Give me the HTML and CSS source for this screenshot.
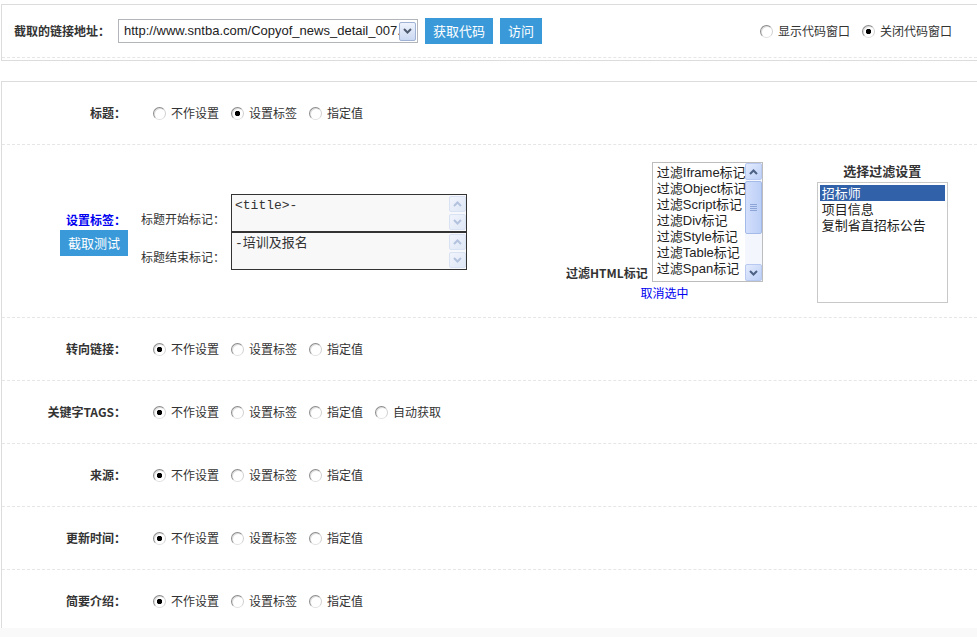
FILE: index.html
```html
<!DOCTYPE html>
<html lang="zh-CN">
<head>
<meta charset="utf-8">
<title>采集设置</title>
<link rel="stylesheet" href="styles.css">
</head>
<body>
<div class="page">
  <div class="panel top-panel">
    <div class="top-row">
      <div class="url-group">
        <span class="field-label">截取的链接地址：</span>
        <div class="fake-select">
          <span class="fake-select-text">http://www.sntba.com/Copyof_news_detail_007.html</span>
          <span class="drop-btn"><svg width="9" height="6" viewBox="0 0 9 6"><path d="M1 1 L4.5 4.5 L8 1" fill="none" stroke="#4f5b70" stroke-width="2"/></svg></span>
        </div>
        <button class="btn">获取代码</button>
        <button class="btn">访问</button>
      </div>
      <div class="opts opts-top">
        <label class="opt"><input type="radio" name="codewin">显示代码窗口</label>
        <label class="opt"><input type="radio" name="codewin" checked>关闭代码窗口</label>
      </div>
    </div>
  </div>

  <div class="panel main-panel">
    <div class="row">
      <div class="row-label">标题：</div>
      <div class="opts">
        <label class="opt"><input type="radio" name="r1">不作设置</label>
        <label class="opt"><input type="radio" name="r1" checked>设置标签</label>
        <label class="opt"><input type="radio" name="r1">指定值</label>
      </div>
    </div>

    <div class="row row-tag">
      <div class="tag-col">
        <div class="tag-label">设置标签：</div>
        <button class="btn tag-btn">截取测试</button>
      </div>
      <div class="markers">
        <div class="marker-label">标题开始标记：</div>
        <div class="code-box">
          <div class="code-text">&lt;title&gt;-</div>
          <div class="mini-scroll">
            <span class="sb-btn off"><svg width="9" height="6" viewBox="0 0 9 6"><path d="M1 5 L4.5 1.5 L8 5" fill="none" stroke="#b3c2de" stroke-width="2"/></svg></span>
            <span class="sb-btn off"><svg width="9" height="6" viewBox="0 0 9 6"><path d="M1 1 L4.5 4.5 L8 1" fill="none" stroke="#b3c2de" stroke-width="2"/></svg></span>
          </div>
        </div>
        <div class="marker-label">标题结束标记：</div>
        <div class="code-box">
          <div class="code-text">-培训及报名</div>
          <div class="mini-scroll">
            <span class="sb-btn off"><svg width="9" height="6" viewBox="0 0 9 6"><path d="M1 5 L4.5 1.5 L8 5" fill="none" stroke="#b3c2de" stroke-width="2"/></svg></span>
            <span class="sb-btn off"><svg width="9" height="6" viewBox="0 0 9 6"><path d="M1 1 L4.5 4.5 L8 1" fill="none" stroke="#b3c2de" stroke-width="2"/></svg></span>
          </div>
        </div>
      </div>

      <div class="filter-html">
        <div class="filter-line">
          <span class="filter-label">过滤HTML标记</span>
          <div class="listbox listbox-html">
            <ul class="list-items">
              <li>过滤Iframe标记</li>
              <li>过滤Object标记</li>
              <li>过滤Script标记</li>
              <li>过滤Div标记</li>
              <li>过滤Style标记</li>
              <li>过滤Table标记</li>
              <li>过滤Span标记</li>
            </ul>
            <div class="scrollbar">
              <span class="sb-btn"><svg width="9" height="6" viewBox="0 0 9 6"><path d="M1 5 L4.5 1.5 L8 5" fill="none" stroke="#4d6185" stroke-width="2"/></svg></span>
              <span class="sb-thumb"><svg width="7" height="7" viewBox="0 0 7 7"><path d="M0 0.5H7M0 2.5H7M0 4.5H7M0 6.5H7" stroke="#8da4d6" stroke-width="1"/></svg></span>
              <span class="sb-track"></span>
              <span class="sb-btn"><svg width="9" height="6" viewBox="0 0 9 6"><path d="M1 1 L4.5 4.5 L8 1" fill="none" stroke="#4d6185" stroke-width="2"/></svg></span>
            </div>
          </div>
        </div>
        <a class="unselect" href="#">取消选中</a>
      </div>

      <div class="filter-set">
        <div class="filter-set-title">选择过滤设置</div>
        <ul class="listbox listbox-set">
          <li class="selected">招标师</li>
          <li>项目信息</li>
          <li>复制省直招标公告</li>
        </ul>
      </div>
    </div>

    <div class="row">
      <div class="row-label">转向链接：</div>
      <div class="opts">
        <label class="opt"><input type="radio" name="r3" checked>不作设置</label>
        <label class="opt"><input type="radio" name="r3">设置标签</label>
        <label class="opt"><input type="radio" name="r3">指定值</label>
      </div>
    </div>

    <div class="row">
      <div class="row-label">关键字TAGS：</div>
      <div class="opts">
        <label class="opt"><input type="radio" name="r4" checked>不作设置</label>
        <label class="opt"><input type="radio" name="r4">设置标签</label>
        <label class="opt"><input type="radio" name="r4">指定值</label>
        <label class="opt"><input type="radio" name="r4">自动获取</label>
      </div>
    </div>

    <div class="row">
      <div class="row-label">来源：</div>
      <div class="opts">
        <label class="opt"><input type="radio" name="r5" checked>不作设置</label>
        <label class="opt"><input type="radio" name="r5">设置标签</label>
        <label class="opt"><input type="radio" name="r5">指定值</label>
      </div>
    </div>

    <div class="row">
      <div class="row-label">更新时间：</div>
      <div class="opts">
        <label class="opt"><input type="radio" name="r6" checked>不作设置</label>
        <label class="opt"><input type="radio" name="r6">设置标签</label>
        <label class="opt"><input type="radio" name="r6">指定值</label>
      </div>
    </div>

    <div class="row">
      <div class="row-label">简要介绍：</div>
      <div class="opts">
        <label class="opt"><input type="radio" name="r7" checked>不作设置</label>
        <label class="opt"><input type="radio" name="r7">设置标签</label>
        <label class="opt"><input type="radio" name="r7">指定值</label>
      </div>
    </div>
  </div>
</div>
<div class="footer-bar"></div>
</body>
</html>
```

FILE: styles.css
```css
* { box-sizing: border-box; }

body {
  margin: 0;
  background: #fff;
  font-family: "Noto Sans CJK SC", "Liberation Sans", sans-serif;
  font-size: 12px;
  color: #333;
}

.page { padding: 4px 0 0 1px; }

.panel {
  border: 1px solid #dcdcdc;
  border-right: none;
  background: #fff;
}

.top-panel { padding-bottom: 2px; }

.top-row {
  height: 53px;
  border-bottom: 1px dashed #e6e6e6;
  display: flex;
  align-items: center;
  justify-content: space-between;
  padding: 0 25px 0 12px;
}

.url-group { display: flex; align-items: center; }

.field-label {
  font-weight: bold;
  line-height: 14px;
  margin-right: 8px;
  color: #333;
}

.fake-select {
  width: 300px;
  height: 24px;
  border: 1px solid #b2b6bb;
  display: flex;
  align-items: center;
  padding: 0 1px 0 5px;
  background: #fff;
}

.fake-select-text {
  flex: 1;
  min-width: 0;
  overflow: hidden;
  white-space: nowrap;
  font: 13px/16px "Liberation Sans", sans-serif;
  color: #222;
}

.drop-btn {
  flex: none;
  width: 17px;
  height: 19px;
  border: 1px solid #9fb2d6;
  border-radius: 2px;
  background: linear-gradient(#eef3fd, #cbd8f2);
  display: flex;
  align-items: center;
  justify-content: center;
}

.btn {
  height: 26px;
  padding: 0 8px;
  border: 0;
  margin-left: 7px;
  background: #3a9ad9;
  color: #fff;
  font: 13px/26px "Noto Sans CJK SC", sans-serif;
}

.main-panel { margin-top: 20px; }

.row {
  display: flex;
  align-items: center;
  height: 63px;
  border-bottom: 1px dashed #e6e6e6;
}

.row-label {
  flex: none;
  width: 126px;
  padding-right: 2px;
  text-align: right;
  font-weight: bold;
  line-height: 14px;
  color: #333;
}

.opts {
  display: flex;
  align-items: center;
  margin-left: 25px;
}

.opt {
  display: inline-flex;
  align-items: center;
  margin-right: 12px;
  line-height: 14px;
  color: #333;
}

.opts-top { margin-left: 0; }
.opts-top .opt:last-child { margin-right: 0; }

.opt input {
  -webkit-appearance: none;
  appearance: none;
  flex: none;
  width: 13px;
  height: 13px;
  margin: 0 5px 0 0;
  border-radius: 50%;
  border: 1px solid #a0a0a0;
  border-color: #8c8c8c #d0d0d0 #e0e0e0 #8c8c8c;
  background: #fff;
  box-shadow: inset 1px 1px 0 #dedede;
}

.opt input:checked {
  background: radial-gradient(circle at 50% 50%, #000 0, #000 2.4px, #fff 3px);
}

/* big row */
.row-tag { height: 173px; }

.tag-col {
  flex: none;
  width: 126px;
  display: flex;
  flex-direction: column;
  align-items: flex-end;
  padding-top: 6px;
}

.tag-label {
  padding-right: 2px;
  font-weight: bold;
  line-height: 14px;
  color: #0000f0;
}

.tag-btn { margin: 3px 0 0 0; }

.markers {
  flex: none;
  display: grid;
  grid-template-columns: 84px 236px;
  grid-template-rows: 38px 38px;
  column-gap: 6px;
  margin: 2px 0 0 13px;
}

.marker-label {
  padding-top: 18px;
  line-height: 14px;
  white-space: nowrap;
  color: #333;
}

.code-box {
  display: flex;
  height: 38px;
  border: 1px solid #333;
  background: #f8f8f8;
}

.code-text {
  flex: 1;
  padding: 3px 3px;
  font: 13px/16px "Liberation Mono", "Noto Sans CJK SC", monospace;
  color: #333;
  white-space: pre;
}

.mini-scroll {
  flex: none;
  width: 17px;
  display: flex;
  flex-direction: column;
  justify-content: space-between;
  padding: 1px 0;
  background: #f6f8fc;
}

.sb-btn {
  flex: none;
  width: 17px;
  height: 17px;
  border: 1px solid #b7c9f0;
  border-radius: 2px;
  background: linear-gradient(135deg, #e3ebfd, #bdd0f7);
  display: flex;
  align-items: center;
  justify-content: center;
}

.mini-scroll .sb-btn { height: 16px; }

.sb-btn.off {
  border-color: #d9e2f3;
  background: linear-gradient(135deg, #f0f4fc, #dfe7f6);
}

.filter-html {
  flex: none;
  margin-left: 99px;
  display: flex;
  flex-direction: column;
  align-items: center;
}

.filter-line { display: flex; align-items: flex-end; }

.filter-label {
  font-weight: bold;
  line-height: 14px;
  margin: 0 4px 2px 0;
  color: #333;
}

.listbox-html {
  width: 111px;
  height: 120px;
  border: 1px solid #bdbdbd;
  display: flex;
  background: #fff;
}

.list-items {
  flex: 1;
  min-width: 0;
  margin: 0;
  padding: 2px 0 0 4px;
  list-style: none;
  overflow: hidden;
  white-space: nowrap;
  font: 13px/16px "Liberation Sans", "Noto Sans CJK SC", sans-serif;
  color: #222;
}

.scrollbar {
  flex: none;
  width: 17px;
  display: flex;
  flex-direction: column;
  background: #f3f6fc;
}

.sb-thumb {
  height: 53px;
  margin-top: 1px;
  border: 1px solid #a4bbea;
  border-radius: 2px;
  background: linear-gradient(90deg, #d3dffc, #bccff6);
  display: flex;
  align-items: center;
  justify-content: center;
}

.sb-track { flex: 1; }

.unselect {
  margin-top: 4px;
  line-height: 14px;
  color: #0000f0;
  text-decoration: none;
}

.filter-set {
  flex: none;
  margin-left: 54px;
  padding-top: 5px;
  display: flex;
  flex-direction: column;
  align-items: center;
}

.filter-set-title {
  font-size: 13px;
  font-weight: bold;
  line-height: 14px;
  margin-bottom: 4px;
  color: #333;
}

.listbox-set {
  width: 131px;
  height: 121px;
  margin: 0;
  padding: 2px;
  border: 1px solid #c8c8c8;
  list-style: none;
  font: 13px/16px "Noto Sans CJK SC", sans-serif;
  color: #222;
}

.listbox-set li { padding-left: 2px; white-space: nowrap; }

.listbox-set .selected { background: #3161a9; color: #fff; }

.footer-bar {
  position: fixed;
  left: 0;
  right: 0;
  bottom: 0;
  height: 9px;
  background: #f9f9f9;
}
```
